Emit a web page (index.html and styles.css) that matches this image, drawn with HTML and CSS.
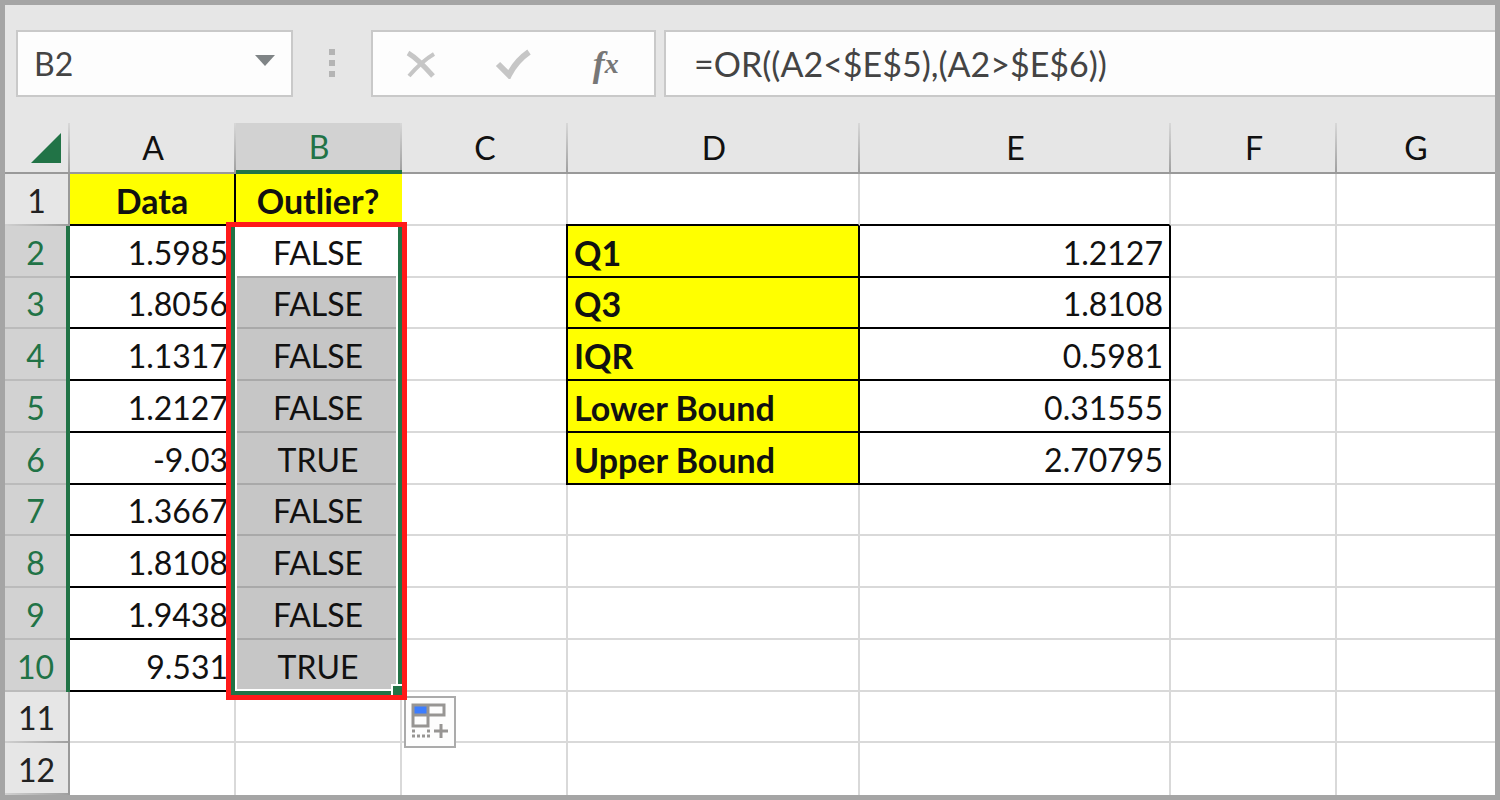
FILE: index.html
```html
<!DOCTYPE html>
<html lang="en">
<head>
  <meta charset="UTF-8">
  <meta name="viewport" content="width=device-width, initial-scale=1.0">
  <title>Outliers</title>
  <link rel="stylesheet" href="styles.css">
</head>
<body>
  <!-- Formula bar -->
  <div class="formula-bar">
    <div class="name-box">
      <input type="text" class="name-input" value="B2" aria-label="Name box">
      <button class="name-arrow" aria-label="Show names">
        <svg width="20" height="12" viewBox="0 0 20 12"><path d="M0 0H20L10 11Z" fill="#7f8486"/></svg>
      </button>
    </div>
    <div class="grip"><span></span><span></span><span></span></div>
    <div class="actions">
      <button class="action" aria-label="Cancel">
        <svg width="32" height="30" viewBox="0 0 32 30"><path d="M3 4Q13 10 28 27" fill="none" stroke="#c6c6c6" stroke-width="5"/><path d="M29 5Q17 12 4 27" fill="none" stroke="#c6c6c6" stroke-width="4"/></svg>
      </button>
      <button class="action" aria-label="Enter">
        <svg width="36" height="30" viewBox="0 0 36 30"><path d="M3 15L14 26Q21 12 34 3" fill="none" stroke="#c6c6c6" stroke-width="6"/></svg>
      </button>
      <button class="action fx" aria-label="Insert function">f<span>x</span></button>
    </div>
    <input type="text" class="formula-input" value="=OR((A2&lt;$E$5),(A2&gt;$E$6))" aria-label="Formula">
  </div>

  <!-- Sheet -->
  <div class="sheet">
    <table class="grid">
      <colgroup>
        <col class="col-head"><col class="col-std"><col class="col-std"><col class="col-std">
        <col class="col-d"><col class="col-e"><col class="col-std"><col>
      </colgroup>
      <thead>
        <tr>
          <th class="corner"><svg width="32" height="32" viewBox="0 0 32 32"><path d="M31 1V31H1Z" fill="#217346"/></svg></th>
          <th>A</th><th class="active">B</th><th>C</th><th>D</th><th>E</th><th>F</th><th class="last">G</th>
        </tr>
      </thead>
      <tbody>
        <tr><th>1</th><td class="title boxed">Data</td><td class="title">Outlier?</td><td></td><td class="line"></td><td class="line"></td><td></td><td></td></tr>
        <tr class="on"><th>2</th><td class="num line">1.5985</td><td class="current">FALSE</td><td></td><td class="label">Q1</td><td class="num boxed">1.2127</td><td></td><td></td></tr>
        <tr class="on"><th>3</th><td class="num line">1.8056</td><td class="picked">FALSE</td><td></td><td class="label">Q3</td><td class="num boxed">1.8108</td><td></td><td></td></tr>
        <tr class="on"><th>4</th><td class="num line">1.1317</td><td class="picked">FALSE</td><td></td><td class="label">IQR</td><td class="num boxed">0.5981</td><td></td><td></td></tr>
        <tr class="on"><th>5</th><td class="num line">1.2127</td><td class="picked">FALSE</td><td></td><td class="label">Lower Bound</td><td class="num boxed">0.31555</td><td></td><td></td></tr>
        <tr class="on"><th>6</th><td class="num line">-9.03</td><td class="picked">TRUE</td><td></td><td class="label">Upper Bound</td><td class="num boxed">2.70795</td><td></td><td></td></tr>
        <tr class="on"><th>7</th><td class="num line">1.3667</td><td class="picked">FALSE</td><td></td><td></td><td></td><td></td><td></td></tr>
        <tr class="on"><th>8</th><td class="num line">1.8108</td><td class="picked">FALSE</td><td></td><td></td><td></td><td></td><td></td></tr>
        <tr class="on"><th>9</th><td class="num line">1.9438</td><td class="picked">FALSE</td><td></td><td></td><td></td><td></td><td></td></tr>
        <tr class="on"><th>10</th><td class="num line">9.531</td><td class="picked">TRUE</td><td></td><td></td><td></td><td></td><td></td></tr>
        <tr><th>11</th><td></td><td></td><td></td><td></td><td></td><td></td><td></td></tr>
        <tr><th>12</th><td></td><td></td><td></td><td></td><td></td><td></td><td></td></tr>
      </tbody>
    </table>

    <!-- Selection B2:B10 -->
    <div class="selection">
      <button class="fill-options" aria-label="Auto fill options">
        <svg width="48" height="48" viewBox="0 0 48 48">
          <path d="M7 7H22V17H7Z" fill="#3c7dff"/>
          <path d="M7 7H38V17H7ZM22 7V28H7V7M7 17H22" fill="none" stroke="#979593" stroke-width="3"/>
          <path d="M6 33H9M21 33H24M6 38H9M11 38H14M16 38H19M21 38H24" stroke="#979593" stroke-width="3"/>
          <path d="M28 33H42M35 26V40" stroke="#979593" stroke-width="3"/>
        </svg>
      </button>
      <div class="highlight">
        <div class="range"></div>
        <div class="handle"></div>
      </div>
    </div>
  </div>
</body>
</html>
```

FILE: styles.css
```css
* {
  box-sizing: border-box;
}
body {
  margin: 0;
  height: 100vh;
  min-height: 800px;
  display: flex;
  flex-direction: column;
  border: 5px solid #a5a5a5;
  background-color: #e6e6e6;
  font-family: Lato, "Liberation Sans", sans-serif;
  font-size: 32px;
  line-height: 40px;
  color: #111;
  overflow: hidden;
}
button {
  padding: 0;
  border: none;
  background: none;
  color: inherit;
}
svg {
  display: block;
}

/* Formula bar */
.formula-bar {
  display: flex;
  flex: none;
  height: 118px;
  padding: 25px 0 26px 11px;
}
.name-box,
.actions,
.formula-input {
  border: 2px solid #c9c9c9;
  background-color: #fdfdfd;
}
.name-box {
  display: flex;
  align-items: center;
  width: 277px;
  padding: 0 16px;
}
.name-input,
.formula-input {
  min-width: 0;
  font-family: inherit;
  color: #444;
}
.name-input {
  flex: 1;
  padding: 0;
  border: none;
  background: none;
  font-size: 32px;
}
.name-arrow {
  padding-bottom: 6px;
}
.grip {
  display: flex;
  flex-direction: column;
  align-items: center;
  justify-content: center;
  gap: 5px;
  width: 78px;
  padding-bottom: 2px;
}
.grip span {
  width: 6px;
  height: 6px;
  background-color: #b4b4b4;
}
.actions {
  display: flex;
  align-items: center;
  width: 285px;
  padding: 0 2px;
  margin-right: 8px;
}
.action {
  flex: 1;
  display: flex;
  align-items: center;
  justify-content: center;
}
.fx {
  font: italic bold 36px/40px "Liberation Serif", serif;
  color: #777;
}
.fx span {
  font-size: 28px;
}
.formula-input {
  flex: 1;
  border-right: none;
  padding: 0 28px;
  font-size: 34px;
}

/* Sheet */
.sheet {
  position: relative;
  flex: 1;
}
.grid {
  width: 100%;
  height: 100%;
  table-layout: fixed;
  border-collapse: separate;
  border-spacing: 0;
}
.col-head {
  width: 65px;
}
.col-std {
  width: 166px;
}
.col-d {
  width: 292px;
}
.col-e {
  width: 311px;
}
tr {
  height: 51px;
}
th,
td {
  padding: 0 6px;
  text-align: center;
  white-space: nowrap;
}
th {
  font-weight: normal;
}
thead th {
  border-bottom: 2px solid #999;
  background: linear-gradient(#d8d8d8, #a0a0a0) right / 2px 100% no-repeat;
}
thead .active {
  border-bottom: 4px solid #217346;
  background-color: #d2d2d2;
  color: #217346;
}
thead .last {
  background: none;
}
.corner svg {
  margin-left: auto;
}
thead .corner {
  padding-right: 8px;
}
tbody th {
  padding: 2px 0 0;
  border-right: 2px solid #999;
  background: linear-gradient(to right, #d0d0d0, #a0a0a0) bottom / 100% 2px no-repeat;
  color: #222;
}
.on th {
  border-right: 4px solid #217346;
  background: #d2d2d2 linear-gradient(#bbb, #bbb) bottom / 100% 2px no-repeat;
  color: #217346;
}
td {
  padding-top: 4px;
  border-right: 2px solid #d9d9d9;
  border-bottom: 2px solid #d9d9d9;
  background-color: #fff;
}
td:last-child {
  border-right: none;
}
tbody tr:last-child td {
  border-bottom: none;
}
.title,
.label {
  background-color: #ff0;
  font-size: 34px;
  font-weight: bold;
}
.title {
  border-right-color: #ff0;
  border-bottom-color: #000;
}
.label {
  border-color: #000;
  box-shadow: -2px 0 0 #000, -2px -2px 0 #000;
  text-align: left;
}
.num {
  text-align: right;
}
.line {
  border-bottom-color: #000;
}
.boxed {
  border-color: #000;
}
.current {
  border-bottom-color: #a9a9a9;
}
.picked {
  border-bottom-color: #a9a9a9;
  background-color: #c6c6c6;
}

/* Covers rows 2 to 10 of the 13 table rows */
.selection {
  position: absolute;
  left: 221px;
  top: calc(100% * 2 / 13 - 4px);
  width: 181px;
  height: calc(100% * 9 / 13 + 12px);
}
.highlight {
  position: absolute;
  inset: 0;
  border: 5px solid #ff1a1a;
}
.range {
  height: 100%;
  border: 4px solid #217346;
  border-top: none;
  box-shadow: inset 0 0 0 2px #fff;
}
.handle {
  position: absolute;
  right: 0;
  bottom: 0;
  width: 11px;
  height: 11px;
  border: solid #fff;
  border-width: 2px 0 0 2px;
  background-color: #217346;
}
.fill-options {
  position: absolute;
  left: 178px;
  bottom: -48px;
  width: 52px;
  height: 52px;
  border: 2px solid #ababab;
  background-color: #fdfdfd;
}
```
